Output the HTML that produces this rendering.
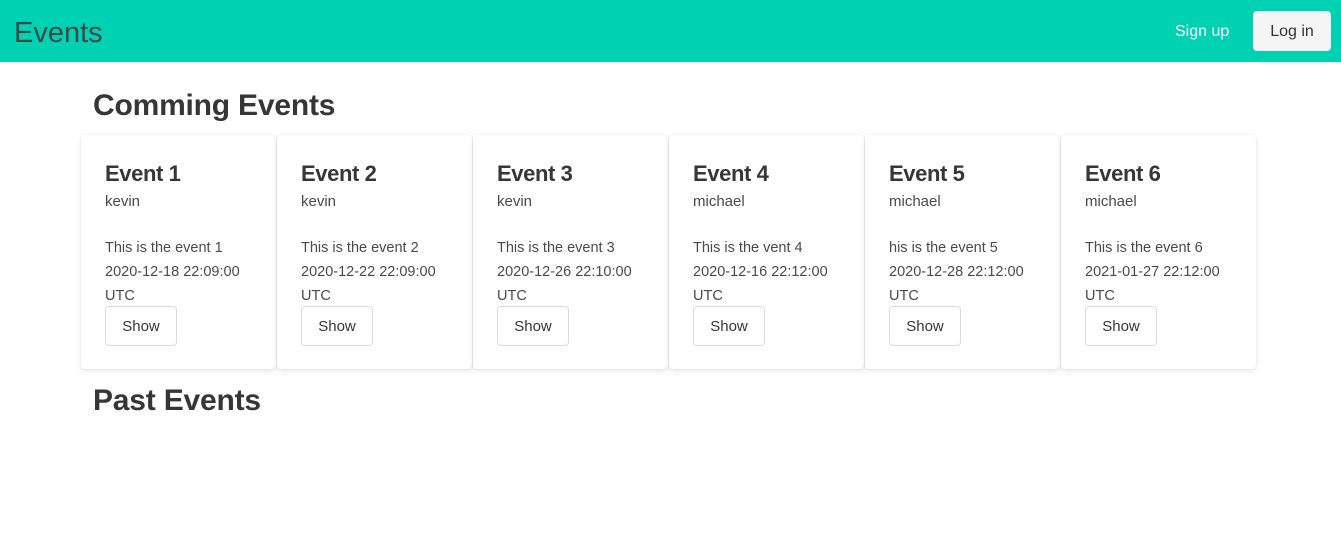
<!DOCTYPE html>
<html><head><style>
*{box-sizing:border-box;margin:0;padding:0}
body{width:1341px;height:548px;background:#fff;font-family:"Liberation Sans",sans-serif;color:#4a4a4a;position:relative;overflow:hidden}
.nav{position:absolute;left:0;top:0;width:1341px;height:62px;background:#00d1b2}
.brand{position:absolute;left:14px;top:17px;font-size:29px;color:#3f4a48}
.su{position:absolute;left:1175px;top:23px;font-size:16px;color:#fff}
.li{position:absolute;left:1253px;top:11px;width:78px;height:40px;background:#f5f5f5;border-radius:4px;font-size:16px;color:#363636;text-align:center;line-height:41px}
h1{position:absolute;left:93px;font-size:30px;font-weight:bold;color:#363636;letter-spacing:-.2px}
.card{position:absolute;top:135px;width:195px;height:234px;background:#fff;border-radius:4px;box-shadow:0 2px 6px rgba(10,10,10,.1),0 0 0 1px rgba(10,10,10,.02);padding:24px}
.t{font-size:22px;font-weight:bold;color:#363636;margin-top:1px;line-height:28px;letter-spacing:-.4px}
.a{font-size:15px;line-height:20px;margin-top:4px}
.d{font-size:14.5px;line-height:24px;margin-top:24px;color:#4a4a4a;white-space:nowrap}
.b{width:72px;height:40px;border:1px solid #dbdbdb;border-radius:4px;text-align:center;line-height:39px;font-size:15px;color:#363636;margin-top:-2px}
</style></head><body>
<div class="nav"><div class="brand">Events</div><div class="su">Sign up</div><div class="li">Log in</div></div>
<h1 style="top:89px">Comming Events</h1>
<div class="card" style="left:81px"><div class="t">Event 1</div><div class="a">kevin</div><div class="d">This is the event 1<br>2020-12-18 22:09:00<br>UTC</div><div class="b">Show</div></div>
<div class="card" style="left:277px"><div class="t">Event 2</div><div class="a">kevin</div><div class="d">This is the event 2<br>2020-12-22 22:09:00<br>UTC</div><div class="b">Show</div></div>
<div class="card" style="left:473px"><div class="t">Event 3</div><div class="a">kevin</div><div class="d">This is the event 3<br>2020-12-26 22:10:00<br>UTC</div><div class="b">Show</div></div>
<div class="card" style="left:669px"><div class="t">Event 4</div><div class="a">michael</div><div class="d">This is the vent 4<br>2020-12-16 22:12:00<br>UTC</div><div class="b">Show</div></div>
<div class="card" style="left:865px"><div class="t">Event 5</div><div class="a">michael</div><div class="d">his is the event 5<br>2020-12-28 22:12:00<br>UTC</div><div class="b">Show</div></div>
<div class="card" style="left:1061px"><div class="t">Event 6</div><div class="a">michael</div><div class="d">This is the event 6<br>2021-01-27 22:12:00<br>UTC</div><div class="b">Show</div></div>
<h1 style="top:384px">Past Events</h1>
</body></html>
